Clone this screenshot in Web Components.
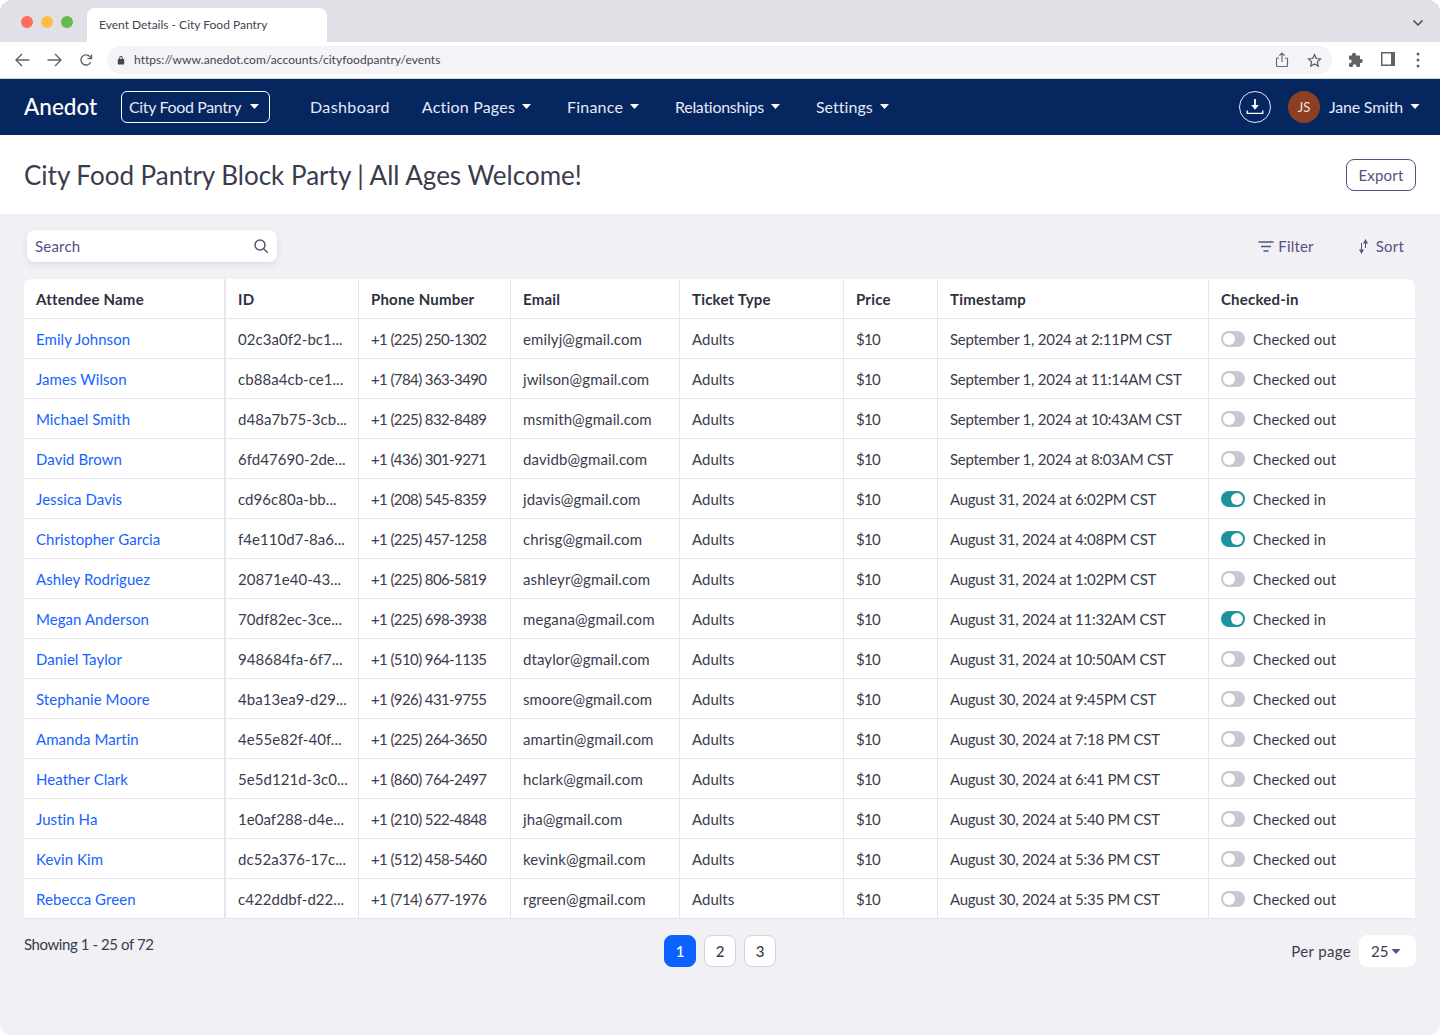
<!DOCTYPE html>
<html lang="en">
<head>
<meta charset="utf-8">
<title>Event Details - City Food Pantry</title>
<style>
  html, body { margin: 0; background: #ffffff; }
  body { font-family: "Lato", "Noto Sans", sans-serif; color: #3a3b4c; }
</style>
</head>
<body>

<app-window>
  <browser-chrome slot="chrome" tab-title="Event Details - City Food Pantry" url="https://www.anedot.com/accounts/cityfoodpantry/events"></browser-chrome>
  <top-nav slot="nav">
    <nav-item track=".4">Dashboard</nav-item>
    <nav-item track=".2" caret>Action Pages</nav-item>
    <nav-item track=".2" caret>Finance</nav-item>
    <nav-item track="-.3" caret>Relationships</nav-item>
    <nav-item track=".05" caret>Settings</nav-item>
  </top-nav>
  <page-header slot="header" heading="City Food Pantry Block Party | All Ages Welcome!">
    <outline-button>Export</outline-button>
  </page-header>
  <table-tools></table-tools>
  <attendee-table></attendee-table>
  <table-footer></table-footer>
</app-window>

<script>
// ---------- data ----------
const attendees = [
  ['Emily Johnson', '02c3a0f2-bc1...', '+1 (225) 250-1302', 'emilyj@gmail.com', 'September 1, 2024 at 2:11PM CST', false],
  ['James Wilson', 'cb88a4cb-ce1...', '+1 (784) 363-3490', 'jwilson@gmail.com', 'September 1, 2024 at 11:14AM CST', false],
  ['Michael Smith', 'd48a7b75-3cb...', '+1 (225) 832-8489', 'msmith@gmail.com', 'September 1, 2024 at 10:43AM CST', false],
  ['David Brown', '6fd47690-2de...', '+1 (436) 301-9271', 'davidb@gmail.com', 'September 1, 2024 at 8:03AM CST', false],
  ['Jessica Davis', 'cd96c80a-bb...', '+1 (208) 545-8359', 'jdavis@gmail.com', 'August 31, 2024 at 6:02PM CST', true],
  ['Christopher Garcia', 'f4e110d7-8a6...', '+1 (225) 457-1258', 'chrisg@gmail.com', 'August 31, 2024 at 4:08PM CST', true],
  ['Ashley Rodriguez', '20871e40-43...', '+1 (225) 806-5819', 'ashleyr@gmail.com', 'August 31, 2024 at 1:02PM CST', false],
  ['Megan Anderson', '70df82ec-3ce...', '+1 (225) 698-3938', 'megana@gmail.com', 'August 31, 2024 at 11:32AM CST', true],
  ['Daniel Taylor', '948684fa-6f7...', '+1 (510) 964-1135', 'dtaylor@gmail.com', 'August 31, 2024 at 10:50AM CST', false],
  ['Stephanie Moore', '4ba13ea9-d29...', '+1 (926) 431-9755', 'smoore@gmail.com', 'August 30, 2024 at 9:45PM CST', false],
  ['Amanda Martin', '4e55e82f-40f...', '+1 (225) 264-3650', 'amartin@gmail.com', 'August 30, 2024 at 7:18 PM CST', false],
  ['Heather Clark', '5e5d121d-3c0...', '+1 (860) 764-2497', 'hclark@gmail.com', 'August 30, 2024 at 6:41 PM CST', false],
  ['Justin Ha', '1e0af288-d4e...', '+1 (210) 522-4848', 'jha@gmail.com', 'August 30, 2024 at 5:40 PM CST', false],
  ['Kevin Kim', 'dc52a376-17c...', '+1 (512) 458-5460', 'kevink@gmail.com', 'August 30, 2024 at 5:36 PM CST', false],
  ['Rebecca Green', 'c422ddbf-d22...', '+1 (714) 677-1976', 'rgreen@gmail.com', 'August 30, 2024 at 5:35 PM CST', false]
];

// small base class, every element just stamps its html into an open root
class Base extends HTMLElement {
  constructor() {
    super();
    this.attachShadow({ mode: 'open' });
  }
  connectedCallback() {
    this.shadowRoot.innerHTML = this.render();
  }
}

// ---------- window ----------
class AppWindow extends Base {
  render() {
    return `
    <style>
      :host { display: block; width: 1440px; height: 1035px; }
      .win { height: 100%; display: flex; flex-direction: column; border-radius: 12px; overflow: hidden; background: #f0f0f5; }
      .main { flex: 1; padding: 16px 24px 0 24px; }
    </style>
    <div class="win">
      <slot name="chrome"></slot>
      <slot name="nav"></slot>
      <slot name="header"></slot>
      <div class="main"><slot></slot></div>
    </div>`;
  }
}
customElements.define('app-window', AppWindow);

// ---------- browser chrome ----------
class BrowserChrome extends Base {
  render() {
    return `
    <style>
      :host { display: block; font-family: "Lato", sans-serif; }
      .tabs { height: 42px; background: #e0e0e6; display: flex; align-items: flex-end; padding-left: 21px; position: relative; }
      .lights { display: flex; gap: 8px; align-self: flex-start; margin-top: 16px; width: 66px; }
      .lights i { width: 12px; height: 12px; border-radius: 50%; }
      .tab { width: 228px; height: 34px; padding-left: 12px; background: #fff; border-radius: 8px 8px 0 0; font-size: 12px; line-height: 34px; color: #44454f; }
      .chev { margin-left: auto; align-self: center; margin-right: 16px; margin-top: 4px; display: flex; }
      .bar { height: 36px; background: #fff; border-bottom: 1px solid #d8d8dc; display: flex; align-items: center; box-sizing: content-box; }
      .btn { width: 32px; display: flex; justify-content: center; flex: none; }
      .back { margin-left: 6px; }
      .url { flex: none; width: 1225px; height: 28px; margin-left: 5px; box-sizing: border-box; padding: 0 2px 0 10px; border-radius: 14px; background: #f3f3f8; display: flex; align-items: center; font-size: 12px; letter-spacing: .04px; color: #44454f; }
      .url span { margin-left: 9px; flex: 1; padding-bottom: 1px; }
      svg { display: block; }
      .tools { display: flex; margin-left: 8px; }
    </style>
    <div class="tabs">
      <div class="lights">
        <i style="background:#ff6b5f"></i><i style="background:#ffbd44"></i><i style="background:#61bb4f"></i>
      </div>
      <div class="tab">${this.getAttribute('tab-title')}</div>
      <div class="chev">
        <svg width="12" height="8" viewBox="0 0 12 8" fill="none" stroke="#44454f" stroke-width="1.5"><path d="M1.5 1.5 6 6l4.500-4.500"/></svg>
      </div>
    </div>
    <div class="bar">
      <div class="btn back">
        <svg width="15" height="14" viewBox="0 0 15 14" fill="none" stroke="#5f6368" stroke-width="1.4"><path d="M14.500 7H1.200M7 1 1 7l6 6"/></svg>
      </div>
      <div class="btn">
        <svg width="15" height="14" viewBox="0 0 15 14" fill="none" stroke="#5f6368" stroke-width="1.4"><path d="M.5 7h13.300M8 1l6 6-6 6"/></svg>
      </div>
      <div class="btn">
        <svg width="14" height="14" viewBox="0 0 16 16" fill="none" stroke="#5f6368" stroke-width="1.6"><path d="M13.200 10.500A5.800 5.800 0 1 1 12.500 4.300L14 6"/><path d="M14.300 1.800V6.400H9.700" /></svg>
      </div>
      <div class="url">
        <svg width="8" height="10" viewBox="0 0 8 10"><path fill="#44454f" d="M2.200 4V2.800a1.800 1.800 0 0 1 3.600 0V4h.7c.4 0 .7.300.7.700v4c0 .4-.3.7-.7.700h-5a.7.700 0 0 1-.7-.7v-4c0-.4.300-.7.700-.7zm1 0h1.600V2.800a.8.800 0 0 0-1.600 0z"/></svg>
        <span>${this.getAttribute('url')}</span>
        <div class="btn">
          <svg width="14" height="16" viewBox="0 0 14 16" fill="none" stroke="#6a6a72" stroke-width="1.2"><path d="M4 6H2.500a1 1 0 0 0-1 1v6.500a1 1 0 0 0 1 1h9a1 1 0 0 0 1-1V7a1 1 0 0 0-1-1H10M7 10V1.200M4.300 3.700 7 1l2.700 2.700"/></svg>
        </div>
        <div class="btn">
          <svg width="15" height="15" viewBox="0 0 15 15" fill="none" stroke="#55565e" stroke-width="1.200"><path d="m7.500 1.600 1.800 3.900 4.200.5-3.100 2.900.8 4.200-3.700-2.100-3.700 2.100.8-4.200-3.100-2.900 4.200-.5z"/></svg>
        </div>
      </div>
      <div class="tools">
        <div class="btn">
          <svg width="16" height="16" viewBox="0 0 16 16"><path fill="#5f6368" d="M6 .8a2 2 0 0 1 2 2V3.500h3a1 1 0 0 1 1 1V7h.8a2 2 0 0 1 0 4H12v3a1 1 0 0 1-1 1H8.500v-.8a1.900 1.900 0 0 0-3.800 0v.8H2a1 1 0 0 1-1-1v-2.800h.8a1.900 1.900 0 0 0 0-3.800H1V4.500a1 1 0 0 1 1-1h2v-.7A2 2 0 0 1 6 .8z"/></svg>
        </div>
        <div class="btn">
          <svg width="14" height="14" viewBox="0 0 14 14"><path fill="#5f6368" fill-rule="evenodd" d="M0 0h14v14H0zm1.500 1.500v11h8.500v-11z"/></svg>
        </div>
        <div class="btn" style="margin-left:-2px">
          <svg width="4" height="16" viewBox="0 0 4 16"><g fill="#5f6368"><circle cx="2" cy="2" r="1.500"/><circle cx="2" cy="8" r="1.500"/><circle cx="2" cy="14" r="1.500"/></g></svg>
        </div>
      </div>
    </div>`;
  }
}
customElements.define('browser-chrome', BrowserChrome);

// ---------- top nav ----------
class NavItem extends Base {
  render() {
    const caret = this.hasAttribute('caret');
    return `
    <style>
      :host { display: block; font-size: 16px; color: #e8e8f6; white-space: nowrap; padding-bottom: 2px; letter-spacing: ${this.getAttribute('track') || 0}px; ${caret ? 'margin-right: 4px;' : ''} }
      .i { display: flex; align-items: center; gap: 7px; }
      svg { display: block; }
    </style>
    <div class="i"><slot></slot>${caret ? '<svg width="9" height="5" viewBox="0 0 9 5"><path fill="#fff" d="M0 0h9L4.500 5z"/></svg>' : ''}</div>`;
  }
}
customElements.define('nav-item', NavItem);

class TopNav extends Base {
  render() {
    return `
    <style>
      :host { display: block; font-family: "Lato", sans-serif; }
      nav { height: 56px; background: #06265f; display: flex; align-items: center; padding: 0 20px 0 24px; color: #e8e8f6; }
      .logo { width: 97px; font-size: 22.5px; font-weight: 500; color: #fff; padding-bottom: 2px; }
      .org { display: flex; align-items: center; box-sizing: border-box; width: 149px; height: 32px; padding: 0 10px 2px 7px; border: 1px solid #fff; border-radius: 6px; font-size: 16px; letter-spacing: -.35px; white-space: nowrap; justify-content: space-between; }
      .org svg { flex: none; }
      .links { display: flex; align-items: center; gap: 32px; margin-left: 40px; }
      .right { margin-left: auto; display: flex; align-items: center; }
      .dl { box-sizing: border-box; width: 32px; height: 32px; border: 1px solid #e8e8f6; border-radius: 50%; display: flex; align-items: center; justify-content: center; }
      .av { width: 32px; height: 32px; border-radius: 50%; background: #8c3f22; color: #f3e6df; font-size: 13px; font-weight: 400; display: flex; align-items: center; justify-content: center; margin-left: 17px; }
      .name { margin-left: 9px; font-size: 16px; letter-spacing: -.2px; padding-bottom: 2px; }
      .car { margin-left: 7px; margin-bottom: 2px; }
      svg { display: block; }
    </style>
    <nav>
      <div class="logo">Anedot</div>
      <div class="org">City Food Pantry <svg width="9" height="5" viewBox="0 0 9 5"><path fill="#fff" d="M0 0h9L4.500 5z"/></svg></div>
      <div class="links"><slot></slot></div>
      <div class="right">
        <div class="dl"><svg width="18" height="16" viewBox="0 0 18 16" fill="none"><path stroke="#fff" stroke-width="1.800" d="M9 0v7"/><path fill="#fff" d="M5.200 6h7.600L9 10.800z"/><path stroke="#fff" stroke-width="1.300" d="M1.200 11.500v2.800h15.600v-2.800"/></svg></div>
        <div class="av">JS</div>
        <div class="name">Jane Smith</div>
        <svg class="car" width="10" height="5" viewBox="0 0 9 5"><path fill="#fff" d="M0 0h9L4.500 5z"/></svg>
      </div>
    </nav>`;
  }
}
customElements.define('top-nav', TopNav);

// ---------- page header ----------
class OutlineButton extends Base {
  render() {
    return `
    <style>
      :host { display: block; }
      div { box-sizing: border-box; width: 70px; height: 32px; border: 1px solid #55527f; border-radius: 8px; font-size: 15px; letter-spacing: .2px; color: #55527f; display: flex; align-items: center; justify-content: center; }
    </style>
    <div><slot></slot></div>`;
  }
}
customElements.define('outline-button', OutlineButton);

class PageHeader extends Base {
  render() {
    return `
    <style>
      :host { display: block; font-family: "Lato", sans-serif; }
      header { height: 79px; background: #fff; display: flex; align-items: center; justify-content: space-between; padding: 0 24px; }
      h1 { margin: 0; font-size: 26px; font-weight: 400; color: #3a3b4c; }
    </style>
    <header><h1>${this.getAttribute('heading')}</h1><slot></slot></header>`;
  }
}
customElements.define('page-header', PageHeader);

// ---------- search + filter row ----------
class TableTools extends Base {
  render() {
    return `
    <style>
      :host { display: block; font-family: "Lato", sans-serif; }
      .row { display: flex; align-items: center; height: 32px; margin-bottom: 17px; padding-left: 3px; color: #55527f; font-size: 15px; letter-spacing: .2px; }
      .search { box-sizing: border-box; width: 250px; height: 32px; background: #fff; border-radius: 8px; box-shadow: 0 2px 6px rgba(60,60,100,.12); display: flex; align-items: center; justify-content: space-between; padding: 0 8px 0 8px; }
      .act { display: flex; align-items: center; }
      .filter { margin-left: auto; gap: 4px; }
      .sort { margin-left: 45px; margin-right: 12px; gap: 8px; }
      svg { display: block; }
    </style>
    <div class="row">
      <div class="search">Search
        <svg width="16" height="16" viewBox="0 0 16 16" fill="none" stroke="#55527f" stroke-width="1.500"><circle cx="7" cy="7" r="5"/><path d="m10.700 10.700 4 4"/></svg>
      </div>
      <div class="act filter">
        <svg width="16" height="11" viewBox="0 0 16 11" fill="none" stroke="#55527f" stroke-width="1.300"><path d="M.5 1h15M3 5.500h10M5.500 10h5"/></svg>
        Filter
      </div>
      <div class="act sort">
        <svg width="9" height="15" viewBox="0 0 9 15"><g fill="#55527f"><path d="M2 4h1v8H2z"/><path d="M0 10.500h5L2.500 15z"/><path d="M6 1h1v8H6z"/><path d="M4 4.500h5L6.500 0z"/></g></svg>
        Sort
      </div>
    </div>`;
  }
}
customElements.define('table-tools', TableTools);

// ---------- toggle ----------
class ToggleSwitch extends Base {
  render() {
    const on = this.hasAttribute('on');
    return `
    <style>
      :host { display: block; width: 24px; height: 16px; flex: none; }
      .t { width: 24px; height: 16px; border-radius: 8px; background: ${on ? '#1a9499' : '#c8c6d5'}; display: flex; align-items: center; justify-content: ${on ? 'flex-end' : 'flex-start'}; padding: 0 2px; box-sizing: border-box; }
      .k { width: 12px; height: 12px; border-radius: 50%; background: #fff; }
    </style>
    <div class="t"><div class="k"></div></div>`;
  }
}
customElements.define('toggle-switch', ToggleSwitch);

// ---------- table ----------
class AttendeeTable extends Base {
  render() {
    const rows = attendees.map(a => `
      <tr>
        <td class="nm"><a>${a[0]}</a></td><td class="id">${a[1]}</td><td class="ph">${a[2]}</td><td class="em">${a[3]}</td>
        <td>Adults</td><td class="pr">$10</td><td class="ts">${a[4]}</td>
        <td><div class="chk"><toggle-switch ${a[5] ? 'on' : ''}></toggle-switch>${a[5] ? 'Checked in' : 'Checked out'}</div></td>
      </tr>`).join('');
    return `
    <style>
      :host { display: block; font-family: "Lato", sans-serif; }
      table { width: 1391px; table-layout: fixed; border-collapse: separate; border-spacing: 0; background: #fff; border-radius: 8px 8px 0 0; font-size: 15px; color: #3a3b4c; }
      th, td { height: 40px; box-sizing: border-box; padding: 0 0 0 12px; text-align: left; white-space: nowrap; overflow: hidden; border-bottom: 1px solid #e6e6ec; border-right: 1px solid #e6e6ec; }
      th:last-child, td:last-child { border-right: 0; }
      th:first-child, td:first-child { border-right-width: 2px; }
      th { font-weight: 700; color: #2f3040; letter-spacing: .2px; }
      a { color: #1463ff; }
      .nm { letter-spacing: .06px; }
      .id { letter-spacing: .05px; }
      .ph { letter-spacing: -.6px; }
      .em { letter-spacing: .1px; }
      .pr { letter-spacing: -.7px; }
      .ts { letter-spacing: -.26px; }
      .chk { display: flex; align-items: center; gap: 8px; }
    </style>
    <table>
      <colgroup>
        <col style="width:202px"><col style="width:133px"><col style="width:152px"><col style="width:169px">
        <col style="width:164px"><col style="width:94px"><col style="width:271px"><col style="width:206px">
      </colgroup>
      <thead><tr><th>Attendee Name</th><th>ID</th><th>Phone Number</th><th>Email</th><th>Ticket Type</th><th>Price</th><th>Timestamp</th><th>Checked-in</th></tr></thead>
      <tbody>${rows}</tbody>
    </table>`;
  }
}
customElements.define('attendee-table', AttendeeTable);

// ---------- footer ----------
class TableFooter extends Base {
  render() {
    return `
    <style>
      :host { display: block; font-family: "Lato", sans-serif; font-size: 15px; color: #3a3b4c; }
      .f { display: grid; grid-template-columns: 1fr auto 1fr; padding-top: 16px; width: 1392px; }
      .show { line-height: 18px; letter-spacing: -.42px; }
      .pager { display: flex; gap: 8px; }
      .pager b { box-sizing: border-box; width: 32px; height: 32px; border-radius: 8px; background: #fff; border: 1px solid #d4d4dc; display: flex; align-items: center; justify-content: center; font-weight: 500; }
      .pager b.on { background: #0d62ff; border-color: #0d62ff; color: #fff; }
      .per { justify-self: end; display: flex; align-items: center; gap: 8px; height: 32px; letter-spacing: .35px; }
      .sel { box-sizing: border-box; width: 57px; height: 32px; background: #fff; border-radius: 8px; display: flex; align-items: center; gap: 3px; padding-left: 12px; letter-spacing: 0; }
      svg { display: block; }
    </style>
    <div class="f">
      <div class="show">Showing 1 - 25 of 72</div>
      <div class="pager"><b class="on">1</b><b>2</b><b>3</b></div>
      <div class="per">Per page
        <div class="sel">25 <svg width="10" height="5" viewBox="0 0 9 5"><path fill="#55527f" d="M0 0h9L4.500 5z"/></svg></div>
      </div>
    </div>`;
  }
}
customElements.define('table-footer', TableFooter);
</script>
</body>
</html>
